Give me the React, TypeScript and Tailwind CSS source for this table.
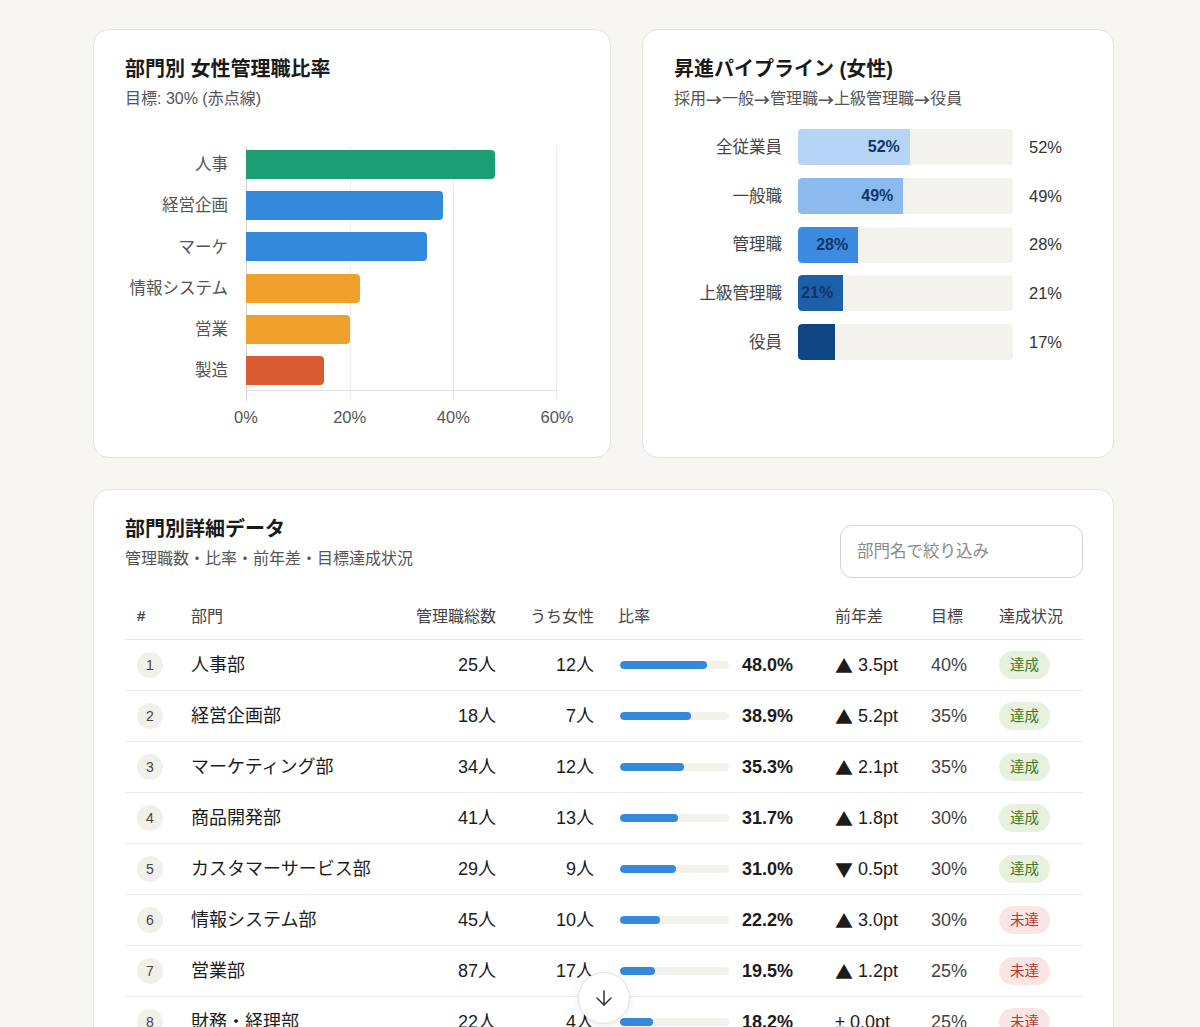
// Women-in-management dashboard: dept chart, promotion pipeline, detail table.

import { ArrowDown } from "lucide-react";

const chartBars = [
  { label: "人事", value: 48, color: "bg-[#1c9e74]" },
  { label: "経営企画", value: 38, color: "bg-[#3589dc]" },
  { label: "マーケ", value: 35, color: "bg-[#3589dc]" },
  { label: "情報システム", value: 22, color: "bg-[#f0a12c]" },
  { label: "営業", value: 20, color: "bg-[#f0a12c]" },
  { label: "製造", value: 15, color: "bg-[#d95b30]" },
];

const pipeline = [
  { label: "全従業員", value: 52, fill: "bg-[#b6d4f5]" },
  { label: "一般職", value: 49, fill: "bg-[#8bbaef]" },
  { label: "管理職", value: 28, fill: "bg-[#3d8be0]" },
  { label: "上級管理職", value: 21, fill: "bg-[#1d5fa9]" },
  { label: "役員", value: 17, fill: "bg-[#0e4582]" },
];

const stages = ["採用", "一般", "管理職", "上級管理職", "役員"];

type Row = {
  name: string;
  total: number;
  women: number;
  ratio: number;
  mark: string;
  diff: string;
  target: number;
};

const rows: Row[] = [
  { name: "人事部", total: 25, women: 12, ratio: 48.0, mark: "▲", diff: "3.5pt", target: 40 },
  { name: "経営企画部", total: 18, women: 7, ratio: 38.9, mark: "▲", diff: "5.2pt", target: 35 },
  { name: "マーケティング部", total: 34, women: 12, ratio: 35.3, mark: "▲", diff: "2.1pt", target: 35 },
  { name: "商品開発部", total: 41, women: 13, ratio: 31.7, mark: "▲", diff: "1.8pt", target: 30 },
  { name: "カスタマーサービス部", total: 29, women: 9, ratio: 31.0, mark: "▼", diff: "0.5pt", target: 30 },
  { name: "情報システム部", total: 45, women: 10, ratio: 22.2, mark: "▲", diff: "3.0pt", target: 30 },
  { name: "営業部", total: 87, women: 17, ratio: 19.5, mark: "▲", diff: "1.2pt", target: 25 },
  { name: "財務・経理部", total: 22, women: 4, ratio: 18.2, mark: "±", diff: "0.0pt", target: 25 },
  { name: "製造部", total: 96, women: 14, ratio: 14.6, mark: "▲", diff: "0.8pt", target: 20 },
];

const PLOT_W = 311;
const BAND_H = 41.17;

function DeptChart() {
  const ticks = [0, 20, 40, 60];
  return (
    <div className="mt-[33px] flex">
      <div className="w-[103px] flex flex-col">
        {chartBars.map((b) => (
          <div
            key={b.label}
            className="h-[41.17px] flex items-center justify-end text-[16.5px] leading-none text-[#555]"
          >
            {b.label}
          </div>
        ))}
      </div>
      <div className="ml-[18px] w-[311px]">
        <div className="relative h-[247px]">
          {ticks.map((t, i) => (
            <div
              key={t}
              className={
                i === 0
                  ? "absolute top-[2px] bottom-[-10px] w-px bg-[#d4d4d4]"
                  : "absolute top-[2px] bottom-[-10px] w-px bg-[#ececec]"
              }
              style={{ left: (t / 60) * PLOT_W - (i === 3 ? 1 : 0) }}
            />
          ))}
          <div className="absolute left-0 right-0 bottom-0 h-px bg-[#e2e2e2]" />
          <div className="relative flex flex-col">
            {chartBars.map((b) => (
              <div key={b.label} className="flex items-center" style={{ height: BAND_H }}>
                <div
                  className={`h-[29px] rounded-r-[4px] ${b.color}`}
                  style={{ width: (b.value / 60) * PLOT_W }}
                />
              </div>
            ))}
          </div>
        </div>
        <div className="relative h-[36px]">
          {ticks.map((t) => (
            <span
              key={t}
              className="absolute top-[16px] -translate-x-1/2 text-[16.5px] leading-[20px] text-[#555]"
              style={{ left: (t / 60) * PLOT_W }}
            >
              {t}%
            </span>
          ))}
        </div>
      </div>
    </div>
  );
}

function Pipeline() {
  return (
    <div className="mt-[18px] flex flex-col gap-[12.75px]">
      {pipeline.map((p) => (
        <div key={p.label} className="flex items-center">
          <div className="w-[108px] text-right text-[16.5px] leading-none text-[#444]">{p.label}</div>
          <div className="ml-[16px] w-[215px] h-[36px] rounded-[4px] bg-[#f3f2ed] overflow-hidden">
            <div
              className={`h-full rounded-l-[4px] flex items-center justify-end pr-[10px] ${p.fill}`}
              style={{ width: `${p.value}%` }}
            >
              {p.value >= 20 && (
                <span className="text-[16px] font-semibold leading-none text-[#0f3668]">{p.value}%</span>
              )}
            </div>
          </div>
          <div className="ml-[16px] text-[16.5px] leading-none text-[#333]">{p.value}%</div>
        </div>
      ))}
    </div>
  );
}

const gridCols = "grid grid-cols-[54px_222px_107px_98px_217px_96px_68px_96px]";

function DetailTable() {
  return (
    <div className="mt-[16px]">
      <div className={`${gridCols} h-[46px] items-center border-b border-[#e6e4df] text-[16px] text-[#444]`}>
        <div className="pl-[12px] font-semibold text-[15px]">#</div>
        <div className="px-[12px]">部門</div>
        <div className="px-[12px] text-right">管理職総数</div>
        <div className="px-[12px] text-right">うち女性</div>
        <div className="px-[12px]">比率</div>
        <div className="px-[12px]">前年差</div>
        <div className="px-[12px]">目標</div>
        <div className="px-[12px]">達成状況</div>
      </div>
      {rows.map((r, i) => {
        const ok = r.ratio >= r.target;
        return (
          <div
            key={r.name}
            className={`${gridCols} h-[51px] items-center border-b border-[#eeece8] text-[18px] text-[#1c1c1c]`}
          >
            <div className="pl-[12px]">
              <span className="flex h-[26px] w-[26px] items-center justify-center rounded-full bg-[#f2f0eb] text-[14px] text-[#444]">
                {i + 1}
              </span>
            </div>
            <div className="px-[12px] whitespace-nowrap">{r.name}</div>
            <div className="px-[12px] text-right">{r.total}人</div>
            <div className="px-[12px] text-right">{r.women}人</div>
            <div className="pl-[14px] flex items-center gap-[13px]">
              <div className="w-[109px] h-[8px] rounded-full bg-[#f2f1ec] overflow-hidden">
                <div className="h-full rounded-full bg-[#3589dc]" style={{ width: `${(r.ratio / 60) * 100}%` }} />
              </div>
              <span className="font-semibold">{r.ratio.toFixed(1)}%</span>
            </div>
            <div className="px-[12px] whitespace-nowrap flex items-center gap-[5px]">
              {r.mark === "±" ? (
                <span>±</span>
              ) : (
                <span className="font-['Noto_Sans_CJK_JP',sans-serif] leading-none">{r.mark}</span>
              )}
              <span>{r.diff}</span>
            </div>
            <div className="px-[12px] text-[#444]">{r.target}%</div>
            <div className="px-[12px]">
              <span
                className={
                  ok
                    ? "inline-flex h-[28px] items-center rounded-full bg-[#e7f1dd] px-[11px] text-[14.5px] text-[#3f7a26]"
                    : "inline-flex h-[28px] items-center rounded-full bg-[#fbe5e4] px-[11px] text-[14.5px] text-[#b53a36]"
                }
              >
                {ok ? "達成" : "未達"}
              </span>
            </div>
          </div>
        );
      })}
    </div>
  );
}

export default function App() {
  return (
    <div className="min-h-screen bg-[#f7f6f3] pt-[29px] pl-[93px] pr-[86px] pb-[40px] font-['Liberation_Sans','Noto_Sans_CJK_JP',sans-serif]">
      <div className="flex gap-[31px]">
        <section className="w-[518px] h-[429px] rounded-[16px] border border-[#e6e4df] bg-white pl-[31px] pt-[25px]">
          <h2 className="text-[20px] font-semibold leading-[28px] text-[#1a1a1a]">部門別 女性管理職比率</h2>
          <p className="mt-[4px] text-[16px] leading-[24px] text-[#555]">目標: 30% (赤点線)</p>
          <DeptChart />
        </section>
        <section className="w-[472px] h-[429px] rounded-[16px] border border-[#e6e4df] bg-white pl-[31px] pt-[25px]">
          <h2 className="text-[20px] font-semibold leading-[28px] text-[#1a1a1a]">昇進パイプライン (女性)</h2>
          <p className="mt-[4px] flex h-[24px] items-center text-[16px] leading-[24px] text-[#555]">
            {stages.map((s, i) => (
              <span key={s} className="flex items-center">
                {i > 0 && <span className="font-['Noto_Sans_CJK_JP',sans-serif] font-bold leading-none">→</span>}
                {s}
              </span>
            ))}
          </p>
          <Pipeline />
        </section>
      </div>

      <section className="mt-[31px] rounded-[16px] border border-[#e6e4df] bg-white pl-[31px] pr-[30px] pt-[25px] pb-[24px]">
        <div className="flex items-start justify-between">
          <div>
            <h2 className="text-[20px] font-semibold leading-[28px] text-[#1a1a1a]">部門別詳細データ</h2>
            <p className="mt-[4px] text-[16px] leading-[24px] text-[#555]">管理職数・比率・前年差・目標達成状況</p>
          </div>
          <input
            className="mt-[10px] w-[243px] h-[53px] rounded-[12px] border border-[#d6d4cf] bg-white px-[16px] text-[16.5px] text-[#333] placeholder:text-[#8a8a8a] outline-none"
            placeholder="部門名で絞り込み"
          />
        </div>
        <DetailTable />
      </section>

      <button className="fixed left-[578px] bottom-[3px] flex h-[52px] w-[52px] items-center justify-center rounded-full border border-[#e4e2dd] bg-white text-[#333] shadow-[0_2px_8px_rgba(0,0,0,0.08)]">
        <ArrowDown size={24} strokeWidth={1.5} />
      </button>
    </div>
  );
}
